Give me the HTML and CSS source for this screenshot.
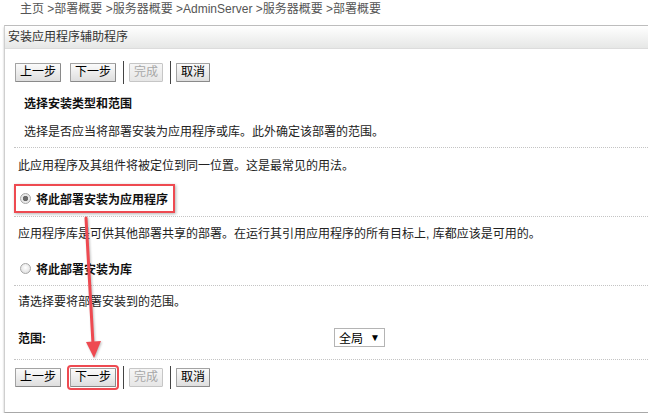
FILE: index.html
```html
<!DOCTYPE html>
<html lang="zh-CN">
<head>
  <meta charset="UTF-8">
  <meta name="viewport" content="width=device-width, initial-scale=1.0">
  <title>安装应用程序辅助程序</title>
  <link rel="stylesheet" href="styles.css">
</head>
<body>
  <div class="crumbs">主页 &gt;部署概要 &gt;服务器概要 &gt;AdminServer &gt;服务器概要 &gt;部署概要</div>

  <div class="panel">
    <div class="panel-head">安装应用程序辅助程序</div>
    <div class="panel-body">
      <!-- Barre de boutons du haut -->
      <div class="toolbar">
        <button class="btn">上一步</button>
        <button class="btn">下一步</button>
        <span class="sep"></span>
        <button class="btn" disabled>完成</button>
        <span class="sep"></span>
        <button class="btn">取消</button>
      </div>

      <div class="intro">
        <h2>选择安装类型和范围</h2>
        <p>选择是否应当将部署安装为应用程序或库。此外确定该部署的范围。</p>
      </div>

      <div class="block block-app">
        <p>此应用程序及其组件将被定位到同一位置。这是最常见的用法。</p>
        <label class="option marked"><input type="radio" name="kind" checked>将此部署安装为应用程序</label>
      </div>

      <div class="block block-lib">
        <p>应用程序库是可供其他部署共享的部署。在运行其引用应用程序的所有目标上, 库都应该是可用的。</p>
        <label class="option"><input type="radio" name="kind">将此部署安装为库</label>
      </div>

      <div class="block block-scope">
        <p>请选择要将部署安装到的范围。</p>
        <div class="scope-row">
          <span class="scope-label">范围:</span>
          <span class="select">全局<span class="caret">▼</span></span>
        </div>
      </div>

      <!-- Barre de boutons du bas -->
      <div class="block block-foot">
        <div class="toolbar">
          <button class="btn">上一步</button>
          <button class="btn btn-marked">下一步</button>
          <span class="sep"></span>
          <button class="btn" disabled>完成</button>
          <span class="sep"></span>
          <button class="btn">取消</button>
        </div>
      </div>
    </div>
  </div>

  <!-- Flèche d'annotation -->
  <svg class="arrow" width="648" height="417" viewBox="0 0 648 417">
    <line x1="86" y1="218" x2="93" y2="344" stroke="#ee4a51" stroke-width="3" stroke-linecap="round"/>
    <polygon points="86,342 101,341 94,358" fill="#ee4a51"/>
  </svg>
</body>
</html>
```

FILE: styles.css
```css
body {
  margin: 0;
  font-family: "Liberation Sans", "Noto Sans CJK SC", sans-serif;
  font-size: 12px;
  color: #222;
  overflow: hidden;
}
.crumbs {
  height: 18px;
  line-height: 18px;
  padding-left: 20px;
  color: #555;
}
.panel {
  margin: 7px 0 0 4px;
  border-top: 1px solid #bdbdbd;
  border-left: 1px solid #cfcfcf;
  border-bottom: 1px solid #a8a8a8;
  box-shadow: 0 2px 2px rgba(0, 0, 0, 0.25);
}
.panel-head {
  height: 22px;
  line-height: 22px;
  padding-left: 3px;
  color: #333;
  background: linear-gradient(#ffffff, #e6e7e6);
  border-bottom: 1px solid #dcdcdc;
}
.panel-body {
  padding: 14px 0 0 9px;
}
.toolbar {
  display: flex;
  align-items: center;
  height: 19px;
  padding-left: 1px;
}
.btn {
  height: 19px;
  padding: 0 4px;
  margin: 0 9px 0 0;
  font-family: inherit;
  font-size: 12px;
  line-height: 17px;
  color: #000;
  background: linear-gradient(#fbfbfb, #dedede);
  border: 1px solid #a3a3a3;
  border-bottom-color: #8a8a8a;
  border-right-color: #8a8a8a;
  border-radius: 1px;
  cursor: pointer;
}
.btn:disabled {
  color: #a8a8a8;
  background: linear-gradient(#f6f6f6, #e6e6e6);
  border-color: #c6c6c6;
  cursor: default;
}
.toolbar .btn:nth-child(2),
.toolbar .btn:nth-child(4) {
  margin-right: 7px;
}
.sep {
  width: 1px;
  height: 23px;
  background: #444;
  margin-right: 5px;
  flex-shrink: 0;
}
.btn-marked {
  outline: 2px solid #ee4a51;
  outline-offset: 1px;
}
.intro {
  padding-left: 10px;
  margin-bottom: 5px;
}
.intro h2 {
  margin: 12px 0 0;
  font-size: 12px;
  line-height: 20px;
  font-weight: bold;
  color: #111;
}
.intro p {
  margin: 8px 0 0;
  line-height: 20px;
}
.block {
  border-top: 1px dotted #c4c4c4;
}
.block p {
  margin: 0;
  padding-left: 4px;
  line-height: 20px;
}
.block-app {
  padding: 8px 0 3px;
}
.block-lib {
  padding: 7px 0 7px;
}
.block-scope {
  padding: 6px 0 12px;
}
.block-foot {
  padding: 8px 0 25px;
}
.option {
  display: flex;
  align-items: center;
  height: 20px;
  padding-left: 6px;
  font-weight: bold;
  color: #111;
  margin-top: 14px;
}
.option input {
  appearance: none;
  -webkit-appearance: none;
  width: 11px;
  height: 11px;
  margin: 0 5px 0 0;
  border: 1px solid #a6a6a6;
  border-radius: 50%;
  background: radial-gradient(circle at 50% 40%, #ffffff, #d9d9d9);
}
.option input:checked {
  background: radial-gradient(circle, #6a6a6a 0 2.4px, #e8e8e8 3px);
}
.option.marked {
  box-sizing: border-box;
  width: 161px;
  height: 29px;
  margin-top: 8px;
  padding-left: 4px;
  border: 2px solid #ee4a51;
  box-shadow: 1px 1px 3px rgba(0, 0, 0, 0.3);
}
.scope-row {
  display: flex;
  align-items: center;
  height: 20px;
  margin-top: 15px;
}
.scope-label {
  width: 316px;
  padding-left: 4px;
  font-weight: bold;
  color: #111;
}
.select {
  display: flex;
  align-items: center;
  height: 17px;
  width: 45px;
  padding-left: 4px;
  border: 1px solid #b4b4b4;
  color: #000;
}
.caret {
  font-size: 10px;
  margin-left: 7px;
}
.arrow {
  position: absolute;
  left: 0;
  top: 0;
  pointer-events: none;
  filter: drop-shadow(1px 1px 1px rgba(0, 0, 0, 0.25));
}
```
